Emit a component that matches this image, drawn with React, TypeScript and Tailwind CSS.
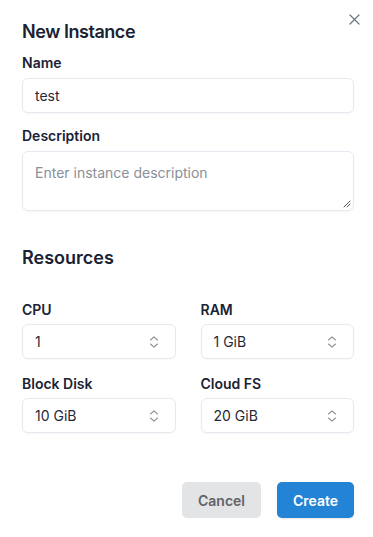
import React from "react";

const font = { fontFamily: "Inter, 'Noto Sans', sans-serif" };

function Chevrons() {
  return (
    <svg width="10" height="14" viewBox="0 0 10 14" fill="none" stroke="#8b9099" strokeWidth="1.1" strokeLinecap="round" strokeLinejoin="round">
      <path d="M1.5 5 L5 1.8 L8.5 5" />
      <path d="M1.5 9 L5 12.2 L8.5 9" />
    </svg>
  );
}

function SelectBox({ label, value }: { label: string; value: string }) {
  return (
    <div className="flex flex-col">
      <div className="text-[14px] leading-[20px] font-semibold text-[#1a2233]">{label}</div>
      <div className="mt-[4px] h-[35px] rounded-[6px] border border-[#e5e9f0] shadow-[0_1px_2px_rgba(0,0,0,0.04)] flex items-center justify-between pl-[12px] pr-[16px]">
        <span className="text-[14px] text-[#1f2937]">{value}</span>
        <Chevrons />
      </div>
    </div>
  );
}

export default function App() {
  return (
    <div className="w-[373px] h-[537px] bg-white relative" style={font}>
      <button className="absolute left-[349px] top-[14px] w-[11px] h-[11px] flex items-center justify-center">
        <svg width="11" height="11" viewBox="0 0 11 11" stroke="#6b7280" strokeWidth="1.2" strokeLinecap="round">
          <path d="M1 1 L10 10 M10 1 L1 10" />
        </svg>
      </button>
      <div className="pl-[22px] pr-[19px] pt-[18px] flex flex-col">
        <h2 className="text-[18px] leading-[28px] font-semibold tracking-tight text-[#1a2233]">New Instance</h2>
        <div className="mt-[7px] text-[14px] leading-[20px] font-semibold text-[#1a2233]">Name</div>
        <div className="mt-[5px] h-[35px] rounded-[6px] border border-[#e5e9f0] shadow-[0_1px_2px_rgba(0,0,0,0.04)] flex items-center px-[12px]">
          <span className="text-[14px] text-[#1f2937]">test</span>
        </div>
        <div className="mt-[13px] text-[14px] leading-[20px] font-semibold text-[#1a2233]">Description</div>
        <div className="mt-[5px] h-[60px] rounded-[6px] border border-[#e5e9f0] shadow-[0_1px_2px_rgba(0,0,0,0.04)] relative px-[12px] pt-[8px]">
          <span className="text-[14px] leading-[20px] text-[#8a8f98]">Enter instance description</span>
          <svg className="absolute right-[2px] bottom-[2px]" width="8" height="8" viewBox="0 0 8 8" stroke="#555" strokeWidth="1" strokeLinecap="round">
            <path d="M7 1 L1 7 M7 4 L4 7" />
          </svg>
        </div>
        <h3 className="mt-[33px] text-[18px] leading-[28px] font-semibold text-[#1a2233]">Resources</h3>
        <div className="mt-[28px] grid grid-cols-2 gap-x-[25px] gap-y-[15px]">
          <SelectBox label="CPU" value="1" />
          <SelectBox label="RAM" value="1 GiB" />
          <SelectBox label="Block Disk" value="10 GiB" />
          <SelectBox label="Cloud FS" value="20 GiB" />
        </div>
        <div className="mt-[49px] flex justify-end gap-[16px]">
          <button className="w-[79px] h-[36px] rounded-[5px] bg-[#e3e4e6] text-[14px] font-semibold text-[#5f6368]">Cancel</button>
          <button className="w-[77px] h-[36px] rounded-[5px] bg-[#2383d5] text-[14px] font-semibold text-white shadow-[0_1px_2px_rgba(0,0,0,0.1)]">Create</button>
        </div>
      </div>
    </div>
  );
}
